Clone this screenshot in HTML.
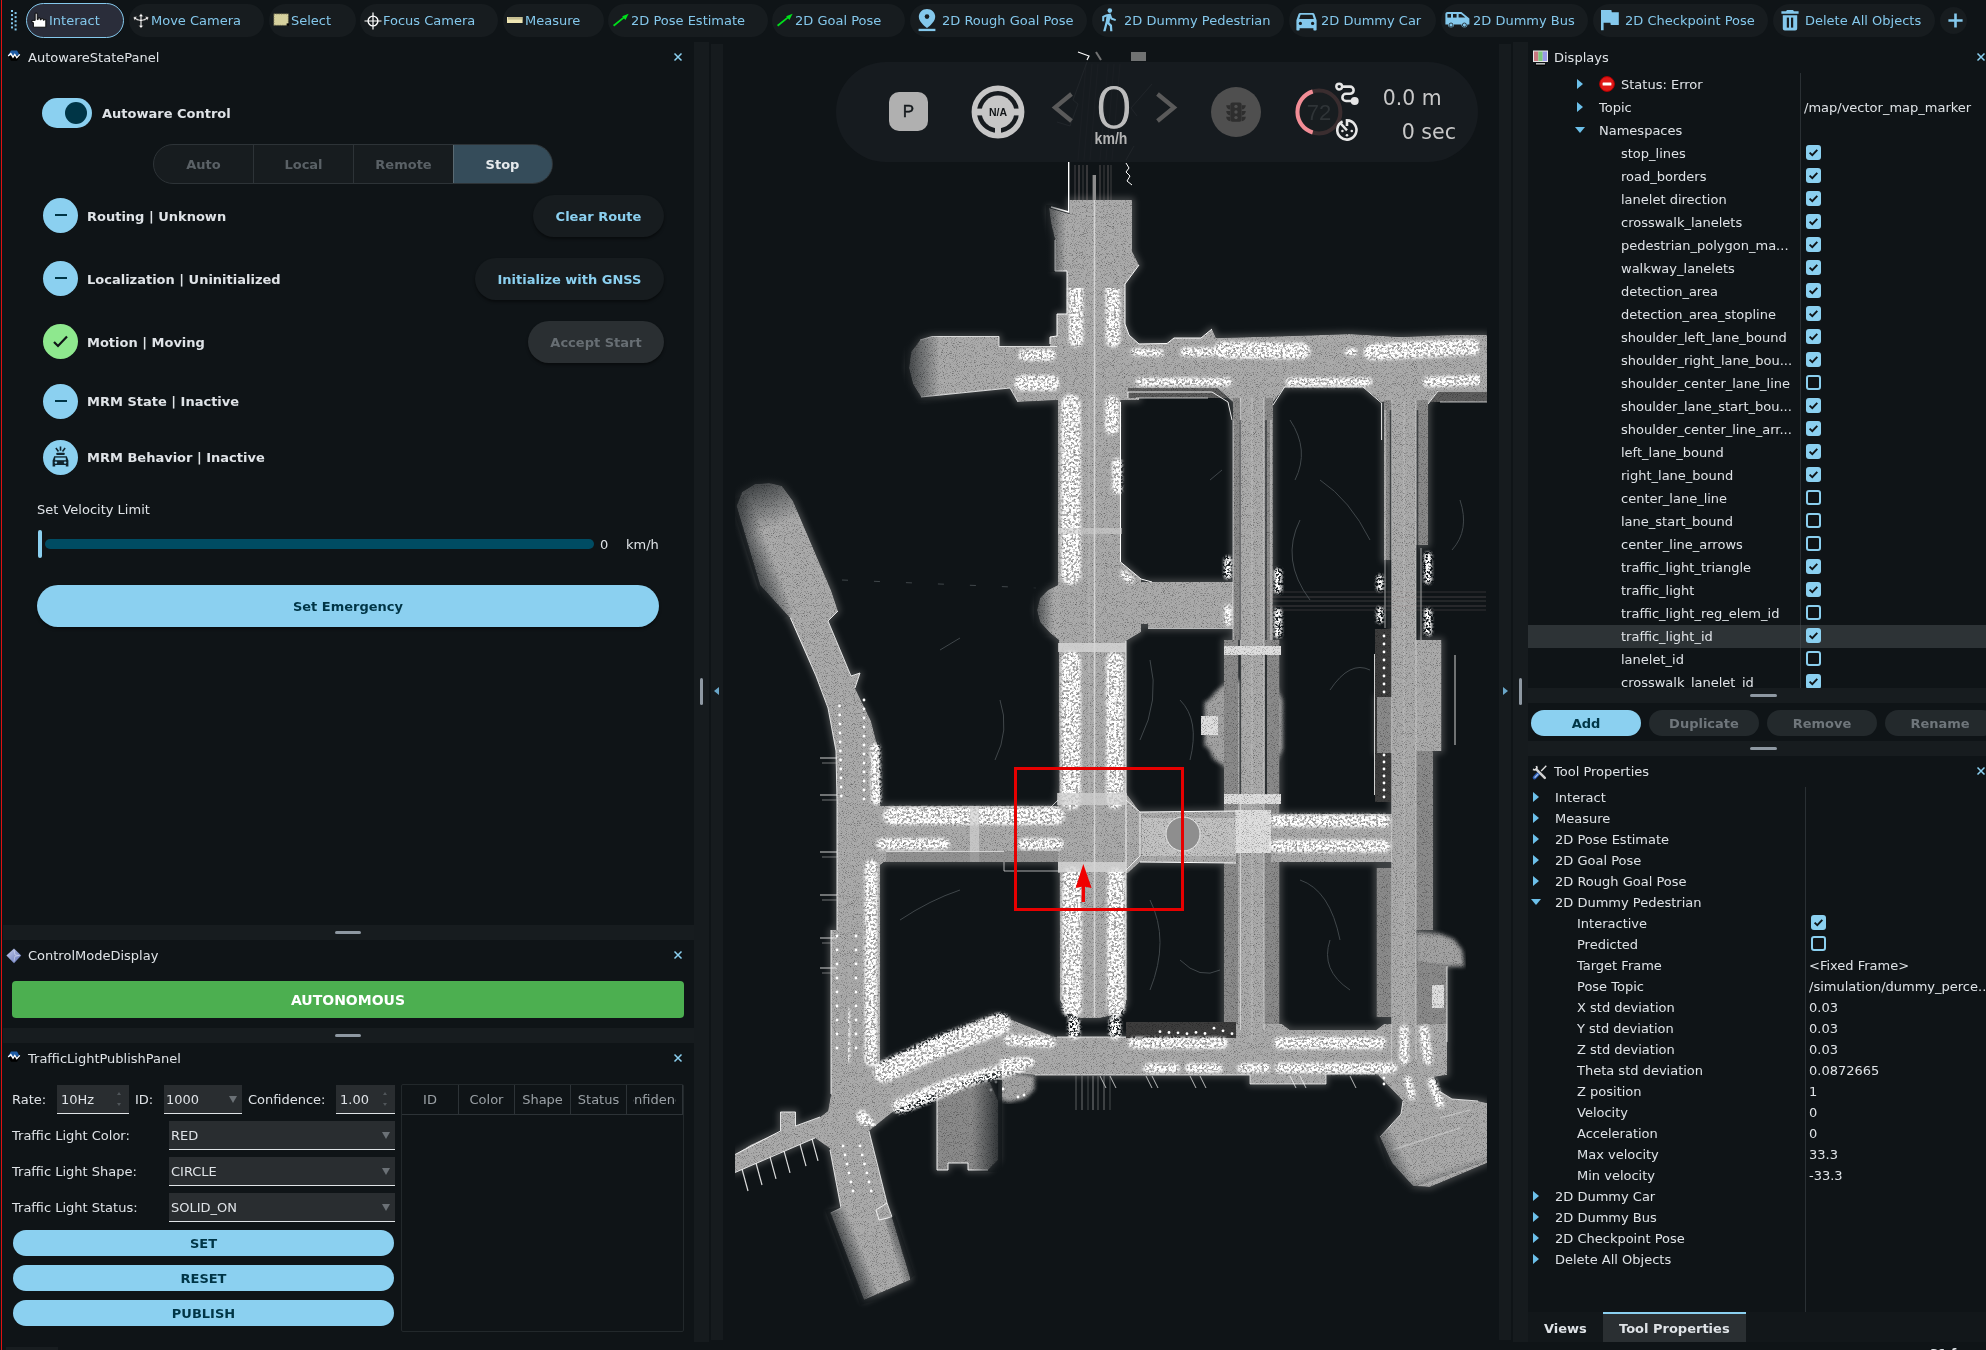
<!DOCTYPE html>
<html lang="en">
<head>
<meta charset="utf-8">
<title>RViz - Autoware</title>
<style>
*{box-sizing:border-box;margin:0;padding:0}
html,body{width:1986px;height:1350px;overflow:hidden;background:#0f1417}
body{position:relative;filter:contrast(1);font-family:"DejaVu Sans","Liberation Sans",sans-serif;font-size:13px;color:#dfe3e7;line-height:20px}
.a{position:absolute;white-space:nowrap}
.t{position:absolute;white-space:nowrap;height:20px;line-height:22px}
.b{font-weight:bold}
.blue{color:#8bd0f0}
.tb{position:absolute;top:4px;height:33px;border-radius:17px;background:#171c1f;color:#84c8ec;font-size:13px;line-height:34px;white-space:nowrap}
.tb span{position:absolute;top:0}
.tb svg{position:absolute}
.pill{position:absolute;border-radius:21px;background:#171c1f;box-shadow:0 2px 3px rgba(0,0,0,.45);font-weight:bold;color:#8bd0f0;text-align:center;height:42px;line-height:44px}
.circ{position:absolute;margin-left:.5px;width:35px;height:35px;border-radius:50%;background:#8bd0f0}
.bbtn{position:absolute;border-radius:13px;background:#8bd0f0;color:#003546;font-weight:bold;text-align:center;height:26px;line-height:28px}
.gbtn{position:absolute;border-radius:13px;background:#23292c;color:#6f767b;font-weight:bold;text-align:center;height:26px;line-height:28px}
.inp{position:absolute;background:#292d30;border-bottom:1px solid #e0e4e7;height:29px;line-height:30px;padding-left:4px;color:#dfe3e7;font-size:13px}
.hb{position:absolute;background:#8e98a2;border-radius:2px}
.strip{position:absolute;background:#171c1f}
.cb{position:absolute;width:15px;height:15px;border-radius:3px;background:#8bd0f0}
.cb.off{background:transparent;border:2px solid #8bd0f0}
.cb svg{position:absolute;left:0;top:0}
.ar{position:absolute;width:0;height:0;border-left:6px solid #6cc0ea;border-top:5px solid transparent;border-bottom:5px solid transparent}
.ad{position:absolute;width:0;height:0;border-top:6px solid #6cc0ea;border-left:5px solid transparent;border-right:5px solid transparent}
.x{position:absolute;width:10px;height:10px}
</style>
</head>
<body>
<!-- left red edge -->
<div class="a" style="left:1px;top:0;width:1px;height:1350px;background:#e01010"></div>
<!-- toolbar -->
<div id="toolbar">
<svg class="a" style="left:10px;top:9px" width="8" height="22" viewBox="0 0 8 22"><g fill="#84c8ec"><rect x="1" y="1.00" width="2" height="2"/><rect x="4.6" y="3.05" width="2" height="2"/><rect x="1" y="5.10" width="2" height="2"/><rect x="4.6" y="7.15" width="2" height="2"/><rect x="1" y="9.20" width="2" height="2"/><rect x="4.6" y="11.25" width="2" height="2"/><rect x="1" y="13.30" width="2" height="2"/><rect x="4.6" y="15.35" width="2" height="2"/><rect x="1" y="17.40" width="2" height="2"/><rect x="4.6" y="19.45" width="2" height="2"/></g></svg>
<div class="tb" style="left:26px;width:98px;background:#2a2d3a;border:1px solid #84c8ec;top:3px;height:35px;border-radius:18px"><span style="left:22px">Interact</span>
 <svg style="left:3px;top:8px" width="17" height="17" viewBox="0 0 17 17"><path d="M5.2 1.2h2v6.4h1V6h2v1.8h1V6.6h2v1.6h1V7.6h1.6v7.6H3.4v-4.6H2V8.4h3.2z" fill="#fff" stroke="#000" stroke-width=".9"/></svg></div>
<div class="tb" style="left:129px;width:135px"><span style="left:22px">Move Camera</span>
 <svg style="left:4px;top:9px" width="16" height="16" viewBox="0 0 16 16"><path d="M8 .6L10.4 3.4H8.8V6.6Q11.4 6.4 13 5L12 3.6L15.6 4L14.6 7.6L13.8 6.2Q12 7.8 8.8 8V12.4H10.4L8 15.2L5.6 12.4H7.2V8Q4 7.8 2.2 6.2L1.4 7.6L.4 4L4 3.6L3 5Q4.600 6.400 7.2 6.600V3.4H5.6Z" fill="#fff" stroke="#222" stroke-width=".5"/></svg></div>
<div class="tb" style="left:269px;width:87px"><span style="left:22px">Select</span>
 <svg style="left:4px;top:9px" width="17" height="14" viewBox="0 0 17 14"><rect x=".8" y=".8" width="14.6" height="11.6" fill="#d6d19e" stroke="#5a5840" stroke-width="1" stroke-dasharray="1.2 1.2"/><rect x="13.6" y="10.4" width="2.4" height="2.4" fill="#000"/></svg></div>
<div class="tb" style="left:360px;width:138px"><span style="left:23px">Focus Camera</span>
 <svg style="left:4px;top:8px" width="18" height="18" viewBox="-9 -9 18 18"><circle r="4.9" fill="none" stroke="#fff" stroke-width="1.4"/><path d="M-8.5 0H8.500M0 -8.5V8.500" stroke="#fff" stroke-width="1.2"/></svg></div>
<div class="tb" style="left:503px;width:101px"><span style="left:22px">Measure</span>
 <svg style="left:4px;top:13px" width="16" height="7" viewBox="0 0 16 7"><rect x="0" y="0" width="15.6" height="6" fill="#efe6b4"/><path d="M2 0v2.600M4 0v2.600M6 0v2.600M8 0v2.600M10 0v2.600M12 0v2.600M14 0v2.600" stroke="#8a8460" stroke-width=".8"/></svg></div>
<div class="tb" style="left:608px;width:160px"><span style="left:23px">2D Pose Estimate</span>
 <svg style="left:4px;top:8px" width="18" height="16" viewBox="0 0 18 16"><path d="M1.600 13.800L12 5.400" stroke="#00e01c" stroke-width="1.800"/><path d="M16.600 1.800L10.200 4.200L13.400 8Z" fill="#00e01c"/></svg></div>
<div class="tb" style="left:772px;width:133px"><span style="left:23px">2D Goal Pose</span>
 <svg style="left:4px;top:8px" width="18" height="16" viewBox="0 0 18 16"><path d="M1.600 13.800L12 5.400" stroke="#00e01c" stroke-width="1.800"/><path d="M16.600 1.800L10.200 4.200L13.400 8Z" fill="#00e01c"/></svg></div>
<div class="tb" style="left:910px;width:177px"><span style="left:32px">2D Rough Goal Pose</span>
 <svg style="left:8px;top:5px" width="18" height="23" viewBox="0 0 18 23"><path d="M9 0C4.400 0 .8 3.500 .8 7.900C.8 13 9 19 9 19S17.200 13 17.200 7.900C17.200 3.500 13.600 0 9 0Z" fill="#84c8ec"/><circle cx="9" cy="7.600" r="2.300" fill="#171c1f"/><rect x=".6" y="19.800" width="16.800" height="2.300" fill="#84c8ec"/></svg></div>
<div class="tb" style="left:1092px;width:192px"><span style="left:32px">2D Dummy Pedestrian</span>
 <svg style="left:9px;top:4px" width="16" height="24" viewBox="0 0 16 24"><g fill="#84c8ec"><circle cx="8.800" cy="2.600" r="2.300"/><path d="M4.800 6.400L9.600 5.600L11.200 9.800L15 11.200L14.400 13L9.800 11.600L9.200 10.200L8.400 14.400L11 17L11.400 23.200H9.200L8.800 18.200L6.400 16L4.600 23.200H2.200L4.800 13.200L5.400 8.400L3.200 9.400V13.200H1.200V8.200Z"/></g></svg></div>
<div class="tb" style="left:1289px;width:147px"><span style="left:32px">2D Dummy Car</span>
 <svg style="left:7px;top:9px" width="21" height="18" viewBox="0 0 21 18"><path d="M4.400 0H16.600C17.600 0 18.300 .6 18.600 1.400L20.600 7.200V16.600C20.600 17.200 20.200 17.600 19.600 17.600H18.400C17.800 17.600 17.400 17.200 17.400 16.600V15.200H3.600V16.600C3.600 17.200 3.200 17.600 2.600 17.600H1.400C.8 17.600 .4 17.200 .4 16.600V7.200L2.400 1.400C2.700 .6 3.400 0 4.400 0Z" fill="#84c8ec"/><path d="M4.600 1.800H16.400L17.800 6H3.200Z" fill="#171c1f"/><circle cx="4.400" cy="10.400" r="1.600" fill="#171c1f"/><circle cx="16.600" cy="10.400" r="1.600" fill="#171c1f"/></svg></div>
<div class="tb" style="left:1441px;width:147px"><span style="left:32px">2D Dummy Bus</span>
 <svg style="left:4px;top:8px" width="25" height="17" viewBox="0 0 25 17"><path d="M2.400 0H16.400L24.400 6.600V12.400H22.400A3 3 0 0 1 16.400 12.400H9A3 3 0 0 1 3 12.400H.4V2C.4 .9 1.300 0 2.400 0Z" fill="#84c8ec"/><g fill="#171c1f"><rect x="2.400" y="2" width="3.600" height="3.600"/><rect x="8" y="2" width="3.600" height="3.600"/><path d="M13.600 2H16L20.400 5.600H13.600Z"/></g><circle cx="6" cy="13" r="2" fill="#84c8ec" stroke="#171c1f" stroke-width=".8"/><circle cx="19.400" cy="13" r="2" fill="#84c8ec" stroke="#171c1f" stroke-width=".8"/></svg></div>
<div class="tb" style="left:1593px;width:175px"><span style="left:32px">2D Checkpoint Pose</span>
 <svg style="left:8px;top:6px" width="18" height="21" viewBox="0 0 18 21"><path d="M0 0H10.400L10.800 2.200H17.800V15H9.800L9.400 12.800H2.600V20.200H0Z" fill="#84c8ec"/></svg></div>
<div class="tb" style="left:1773px;width:162px"><span style="left:32px">Delete All Objects</span>
 <svg style="left:8px;top:6px" width="18" height="21" viewBox="0 0 18 21"><path d="M6 0H12L13 1.200H17.600V3.800H.4V1.200H5Z" fill="#84c8ec"/><path d="M1.800 5.200H16.200V18.400C16.200 19.600 15.300 20.400 14.200 20.400H3.800C2.700 20.400 1.800 19.600 1.800 18.400Z" fill="#84c8ec"/><rect x="5.800" y="7.600" width="2.200" height="10" fill="#171c1f"/><rect x="10" y="7.600" width="2.200" height="10" fill="#171c1f"/></svg></div>
<div class="tb" style="left:1940px;width:27px;top:7px;height:27px;border-radius:14px"><svg style="left:7.500px;top:6px" width="15" height="15" viewBox="0 0 15 15"><path d="M7.500 .4V14.600M.4 7.500H14.600" stroke="#84c8ec" stroke-width="2.600"/></svg></div>
</div>
<!-- ===== AutowareStatePanel ===== -->
<div id="left">
<svg class="a" style="left:7px;top:50px" width="14" height="12" viewBox="0 0 14 12"><path d="M4 .6H10L13 5.800H1Z" fill="#1f5ca4"/><path d="M1 5.800H13L10 10.800H4Z" fill="#000"/><path d="M1.200 6L3.800 3.600L6 7.200L7.800 4.400L9.800 7.600L12.800 4.400" fill="none" stroke="#fff" stroke-width="1.300"/></svg>
<div class="t" style="left:28px;top:47px">AutowareStatePanel</div>
<svg class="x" style="left:673px;top:52px" viewBox="0 0 10 10"><path d="M1.500 1.500L8.500 8.500M8.500 1.500L1.500 8.500" stroke="#8bd0f0" stroke-width="1.500" fill="none"/></svg>
<!-- toggle -->
<div class="a" style="left:42px;top:98px;width:50px;height:30px;border-radius:15px;background:#8bd0f0"></div>
<div class="a" style="left:65px;top:102px;width:22px;height:22px;border-radius:11px;background:#003546"></div>
<div class="t b" style="left:102px;top:103px">Autoware Control</div>
<!-- segmented -->
<div class="a" style="left:153px;top:144px;width:400px;height:40px;border-radius:20px;background:#171c1f;border:1px solid #2d3337;overflow:hidden">
 <div class="a" style="left:99px;top:0;width:1px;height:40px;background:#2d3337"></div>
 <div class="a" style="left:199px;top:0;width:1px;height:40px;background:#2d3337"></div>
 <div class="a" style="left:299px;top:-1px;width:100px;height:40px;background:#354c5a;border:1px solid #5a6a72;border-radius:0 20px 20px 0"></div>
 <div class="t b" style="left:0;width:99px;top:9px;text-align:center;color:#5a6166">Auto</div>
 <div class="t b" style="left:100px;width:99px;top:9px;text-align:center;color:#5a6166">Local</div>
 <div class="t b" style="left:200px;width:99px;top:9px;text-align:center;color:#5a6166">Remote</div>
 <div class="t b" style="left:299px;width:99px;top:9px;text-align:center;color:#e6eaed">Stop</div>
</div>
<!-- status rows -->
<div class="circ" style="left:42px;top:198px"><div class="a" style="left:12px;top:16px;width:12px;height:2px;background:#003546"></div></div>
<div class="t b" style="left:87px;top:206px">Routing | Unknown</div>
<div class="pill" style="left:533px;top:195px;width:131px">Clear Route</div>

<div class="circ" style="left:42px;top:261px"><div class="a" style="left:12px;top:16px;width:12px;height:2px;background:#003546"></div></div>
<div class="t b" style="left:87px;top:269px">Localization | Uninitialized</div>
<div class="pill" style="left:475px;top:258px;width:189px">Initialize with GNSS</div>

<div class="circ" style="left:42px;top:324px;background:#8ee88e"><svg class="a" style="left:9px;top:10px" width="17" height="15" viewBox="0 0 17 15"><path d="M2 8L6 12L15 2.5" stroke="#0f1417" stroke-width="2.2" fill="none"/></svg></div>
<div class="t b" style="left:87px;top:332px">Motion | Moving</div>
<div class="pill" style="left:528px;top:321px;width:136px;background:#2a2f32;color:#676e73">Accept Start</div>

<div class="circ" style="left:42px;top:384px"><div class="a" style="left:12px;top:16px;width:12px;height:2px;background:#003546"></div></div>
<div class="t b" style="left:87px;top:391px">MRM State | Inactive</div>

<div class="circ" style="left:42px;top:440px"><svg class="a" style="left:8px;top:6px" width="19" height="22" viewBox="0 0 19 22"><g fill="#10242e"><path d="M3.2 10.2h12.6l1.6 4.2v6.2h-2.6v-1.6H4.2v1.6H1.6v-6.2z"/><rect x="8.7" y="0.5" width="1.6" height="4.2"/><rect x="8.7" y="0.5" width="1.6" height="4.2" transform="rotate(-38 9.5 8)"/><rect x="8.7" y="0.5" width="1.6" height="4.2" transform="rotate(38 9.5 8)"/><rect x="5.2" y="6.8" width="8.6" height="2.2" rx="1"/></g><g fill="#8bd0f0"><rect x="4.2" y="11.6" width="10.6" height="2.6"/><circle cx="4.9" cy="16.6" r="1.2"/><circle cx="14.1" cy="16.6" r="1.2"/></g></svg></div>
<div class="t b" style="left:87px;top:447px">MRM Behavior | Inactive</div>

<div class="t" style="left:37px;top:499px">Set Velocity Limit</div>
<div class="a" style="left:45px;top:539px;width:549px;height:10px;border-radius:5px;background:#004c63"></div>
<div class="a" style="left:38px;top:530px;width:4px;height:28px;border-radius:2px;background:#8bd0f0"></div>
<div class="t" style="left:600px;top:534px">0</div>
<div class="t" style="left:626px;top:534px">km/h</div>
<div class="a b" style="left:37px;top:585px;width:622px;height:42px;border-radius:21px;background:#8bd0f0;color:#003546;text-align:center;line-height:44px;box-shadow:0 2px 3px rgba(0,0,0,.4)">Set Emergency</div>

<!-- splitter 1 -->
<div class="strip" style="left:3px;top:925px;width:691px;height:15px"></div>
<div class="hb" style="left:335px;top:931px;width:26px;height:3px"></div>
<!-- ControlModeDisplay -->
<svg class="a" style="left:6px;top:948px" width="16" height="16" viewBox="0 0 16 16"><defs><linearGradient id="dg" x1="0" y1="0" x2="1" y2="1"><stop offset="0" stop-color="#c8d0ee"/><stop offset="1" stop-color="#5c6eb4"/></linearGradient></defs><path d="M8 .4L15.200 7.400L8 15.200L.4 7.400Z" fill="url(#dg)"/><path d="M8 2L9 7L13.600 7.400L8.800 8.400L8 13.600" fill="none" stroke="#e6eaf8" stroke-width=".7" opacity=".7"/></svg>
<div class="t" style="left:28px;top:945px">ControlModeDisplay</div>
<svg class="x" style="left:673px;top:950px" viewBox="0 0 10 10"><path d="M1.500 1.500L8.500 8.500M8.500 1.500L1.500 8.500" stroke="#8bd0f0" stroke-width="1.500" fill="none"/></svg>
<div class="a b" style="left:12px;top:981px;width:672px;height:37px;border-radius:4px;background:#4caf50;color:#fff;text-align:center;line-height:38px;font-size:14px">AUTONOMOUS</div>
<!-- splitter 2 -->
<div class="strip" style="left:3px;top:1028px;width:691px;height:15px"></div>
<div class="hb" style="left:335px;top:1034px;width:26px;height:3px"></div>
<!-- TrafficLightPublishPanel -->
<svg class="a" style="left:7px;top:1051px" width="14" height="12" viewBox="0 0 14 12"><path d="M4 .6H10L13 5.800H1Z" fill="#1f5ca4"/><path d="M1 5.800H13L10 10.800H4Z" fill="#000"/><path d="M1.200 6L3.800 3.600L6 7.200L7.800 4.400L9.800 7.600L12.800 4.400" fill="none" stroke="#fff" stroke-width="1.300"/></svg>
<div class="t" style="left:28px;top:1048px">TrafficLightPublishPanel</div>
<svg class="x" style="left:673px;top:1053px" viewBox="0 0 10 10"><path d="M1.500 1.500L8.500 8.500M8.500 1.500L1.500 8.500" stroke="#8bd0f0" stroke-width="1.500" fill="none"/></svg>
<div class="t" style="left:12px;top:1089px">Rate:</div>
<div class="inp" style="left:57px;top:1085px;width:72px">10Hz</div>
<div class="t" style="left:135px;top:1089px">ID:</div>
<div class="inp" style="left:164px;top:1085px;width:78px;padding-left:2px">1000</div>
<div class="t" style="left:248px;top:1089px">Confidence:</div>
<div class="inp" style="left:336px;top:1085px;width:59px">1.00</div>
<div class="t" style="left:12px;top:1125px">Traffic Light Color:</div>
<div class="inp" style="left:169px;top:1121px;width:226px;padding-left:2px">RED</div>
<div class="t" style="left:12px;top:1161px">Traffic Light Shape:</div>
<div class="inp" style="left:169px;top:1157px;width:226px;padding-left:2px">CIRCLE</div>
<div class="t" style="left:12px;top:1197px">Traffic Light Status:</div>
<div class="inp" style="left:169px;top:1193px;width:226px;padding-left:2px">SOLID_ON</div>
<div class="bbtn" style="left:13px;top:1230px;width:381px">SET</div>
<div class="bbtn" style="left:13px;top:1265px;width:381px">RESET</div>
<div class="bbtn" style="left:13px;top:1300px;width:381px">PUBLISH</div>
<div class="a" style="left:229px;top:1096px;width:0;height:0;border-top:7px solid #6b7176;border-left:4px solid transparent;border-right:4px solid transparent"></div><div class="a" style="left:382px;top:1132px;width:0;height:0;border-top:7px solid #6b7176;border-left:4px solid transparent;border-right:4px solid transparent"></div><div class="a" style="left:382px;top:1168px;width:0;height:0;border-top:7px solid #6b7176;border-left:4px solid transparent;border-right:4px solid transparent"></div><div class="a" style="left:382px;top:1204px;width:0;height:0;border-top:7px solid #6b7176;border-left:4px solid transparent;border-right:4px solid transparent"></div><div class="a" style="left:117px;top:1092px;width:0;height:0;border-bottom:3px solid #50565a;border-left:2px solid transparent;border-right:2px solid transparent"></div><div class="a" style="left:117px;top:1103px;width:0;height:0;border-top:3px solid #50565a;border-left:2px solid transparent;border-right:2px solid transparent"></div><div class="a" style="left:383px;top:1092px;width:0;height:0;border-bottom:3px solid #50565a;border-left:2px solid transparent;border-right:2px solid transparent"></div><div class="a" style="left:383px;top:1103px;width:0;height:0;border-top:3px solid #50565a;border-left:2px solid transparent;border-right:2px solid transparent"></div>
<div id="bl-strip" class="a" style="left:6px;top:1347px;width:52px;height:3px;background:#181d20"></div>
<!-- table -->
<div class="a" style="left:401px;top:1084px;width:283px;height:248px;border:1px solid #22282b;border-radius:2px"></div>
<div class="a" style="left:402px;top:1114px;width:281px;height:1px;background:#2d3337"></div>
<div class="a" style="left:458px;top:1085px;width:1px;height:29px;background:#2d3337"></div>
<div class="a" style="left:514px;top:1085px;width:1px;height:29px;background:#2d3337"></div>
<div class="a" style="left:570px;top:1085px;width:1px;height:29px;background:#2d3337"></div>
<div class="a" style="left:626px;top:1085px;width:1px;height:29px;background:#2d3337"></div>
<div class="a" style="left:682px;top:1085px;width:1px;height:29px;background:#2d3337"></div>
<div class="t" style="left:402px;width:56px;top:1089px;text-align:center;color:#9aa0a5">ID</div>
<div class="t" style="left:459px;width:55px;top:1089px;text-align:center;color:#9aa0a5">Color</div>
<div class="t" style="left:515px;width:55px;top:1089px;text-align:center;color:#9aa0a5">Shape</div>
<div class="t" style="left:571px;width:55px;top:1089px;text-align:center;color:#9aa0a5">Status</div>
<div class="a" style="left:633px;width:43px;top:1089px;height:20px;overflow:hidden"><div class="t" style="left:-16px;top:0;color:#9aa0a5">Confidence</div></div>
</div>
<!-- ===== 3D view (point cloud map) ===== -->
<svg class="a" style="left:723px;top:42px" width="776" height="1300" viewBox="723 42 776 1300">
<defs>
<clipPath id="vc"><rect x="735" y="44" width="752" height="1296"/></clipPath>
<filter id="nz" x="0" y="0" width="100%" height="100%" filterUnits="objectBoundingBox" color-interpolation-filters="sRGB">
 <feTurbulence type="fractalNoise" baseFrequency="1.1" numOctaves="2" seed="7" result="t"/>
 <feColorMatrix in="t" type="matrix" values="1.2 0 0 0 0.42  1.2 0 0 0 0.42  1.2 0 0 0 0.42  0 0 0 0 1" result="g"/>
 <feComposite in="SourceGraphic" in2="g" operator="arithmetic" k1="1" k2="0" k3="0" k4="0" result="m"/>
 <feComposite in="m" in2="SourceAlpha" operator="in"/>
</filter>
<filter id="sp" x="0" y="0" width="100%" height="100%" color-interpolation-filters="sRGB">
 <feTurbulence type="fractalNoise" baseFrequency="0.42" numOctaves="3" seed="11" result="t"/>
 <feColorMatrix in="t" type="matrix" values="0 0 0 0 1  0 0 0 0 1  0 0 0 0 1  6 0 0 0 -2.25" result="a"/>
 <feGaussianBlur in="SourceAlpha" stdDeviation="1.6" result="sb"/>
 <feComposite in="a" in2="sb" operator="in"/>
</filter>
<filter id="bl" x="-5%" y="-5%" width="110%" height="110%"><feGaussianBlur stdDeviation="3.2"/></filter>
<filter id="bl2" x="0" y="0" width="100%" height="100%" color-interpolation-filters="sRGB"><feGaussianBlur in="SourceGraphic" stdDeviation="2.4" result="b"/><feTurbulence type="fractalNoise" baseFrequency="1.1" numOctaves="2" seed="3" result="t"/><feColorMatrix in="t" type="matrix" values="1.2 0 0 0 0.42  1.2 0 0 0 0.42  1.2 0 0 0 0.42  0 0 0 0 1" result="g"/><feComposite in="b" in2="g" operator="arithmetic" k1="1" k2="0" k3="0" k4="0" result="m"/><feComposite in="m" in2="b" operator="in"/></filter>
</defs>
<g clip-path="url(#vc)">
<g filter="url(#bl)" opacity=".4">
<polygon points="1069.5,200 1132,200 1132,251 1139,265 1125,284 1125,324 1129,335 1139,344 1139,400 1050,400 1050,344 1050,337 1057,336 1057,314 1067,314 1067,271 1055,271 1055,240 1051,223 1049,208 1069.5,214" fill="#8c8c8c" stroke="#8c8c8c" stroke-width="5" stroke-linejoin="round"/>
<polygon points="1120,343.5 1167,343.5 1174,338 1201,338 1212,329 1216,338 1290,336 1350,334 1400,337 1450,335 1487,335 1487,390 1438,390.5 1428,404 1381.6,402 1363,387 1285,387 1273,402 1233,402 1217,388 1120,388" fill="#8c8c8c" stroke="#8c8c8c" stroke-width="5" stroke-linejoin="round"/>
<polygon points="1060,346.5 999,346.5 999,336.5 932,336.5 920,340 911,352 909,368 913,384 921,397 1010,388 1018,402 1060,400" fill="#8c8c8c" stroke="#8c8c8c" stroke-width="5" stroke-linejoin="round"/>
<polygon points="1058,398 1120.5,398 1120.5,562 1141,579 1141,632 1126,641 1126,1004 1118,1014 1100,1018 1080,1018 1066,1012 1060,1000 1058.8,640 1050,633 1040,622 1037,610 1040,598 1048,590 1058,585" fill="#8c8c8c" stroke="#8c8c8c" stroke-width="5" stroke-linejoin="round"/>
<polygon points="1120,582 1233,582 1233,628.5 1148,628.5 1148,624 1138,624 1138,634 1120,634" fill="#8c8c8c" stroke="#8c8c8c" stroke-width="5" stroke-linejoin="round"/>
<polygon points="1240.5,398 1264,398 1264,1040 1238,1040 1238,700 1240.5,700" fill="#8c8c8c" stroke="#8c8c8c" stroke-width="5" stroke-linejoin="round"/>
<polygon points="1233,398 1240.5,398 1240.5,640 1233,640" fill="#8c8c8c" stroke="#8c8c8c" stroke-width="5" stroke-linejoin="round"/>
<polygon points="1264,398 1273,398 1273,640 1264,640" fill="#8c8c8c" stroke="#8c8c8c" stroke-width="5" stroke-linejoin="round"/>
<polygon points="1224,640 1238,640 1238,1030 1224,1030" fill="#8c8c8c" stroke="#8c8c8c" stroke-width="5" stroke-linejoin="round"/>
<polygon points="1264,640 1279.5,640 1279.5,1030 1264,1030" fill="#8c8c8c" stroke="#8c8c8c" stroke-width="5" stroke-linejoin="round"/>
<polygon points="1391.7,400 1416,400 1416,1076 1391.7,1076" fill="#8c8c8c" stroke="#8c8c8c" stroke-width="5" stroke-linejoin="round"/>
<polygon points="1384,400 1391.7,400 1391.7,560 1384,560" fill="#8c8c8c" stroke="#8c8c8c" stroke-width="5" stroke-linejoin="round"/>
<polygon points="1416,400 1428,400 1428,545 1416,545" fill="#8c8c8c" stroke="#8c8c8c" stroke-width="5" stroke-linejoin="round"/>
<polygon points="1416,640 1441.5,640 1441.5,751 1416,751" fill="#8c8c8c" stroke="#8c8c8c" stroke-width="5" stroke-linejoin="round"/>
<polygon points="1416,751 1433,751 1433,930 1416,930" fill="#8c8c8c" stroke="#8c8c8c" stroke-width="5" stroke-linejoin="round"/>
<polygon points="1377,697 1392,697 1392,753 1377,753" fill="#8c8c8c" stroke="#8c8c8c" stroke-width="5" stroke-linejoin="round"/>
<polygon points="1376.5,868 1391.7,868 1391.7,1017 1376.5,1017" fill="#8c8c8c" stroke="#8c8c8c" stroke-width="5" stroke-linejoin="round"/>
<polygon points="1416,960 1447,966 1447,1042 1416,1042" fill="#8c8c8c" stroke="#8c8c8c" stroke-width="5" stroke-linejoin="round"/>
<polygon points="880,806 1060,806 1060,862 884,862 872,872 872,800" fill="#8c8c8c" stroke="#8c8c8c" stroke-width="5" stroke-linejoin="round"/>
<polygon points="1058,793 1126,793 1140,812 1236,811 1236,863 1140,862 1128,873 1058,873" fill="#8c8c8c" stroke="#8c8c8c" stroke-width="5" stroke-linejoin="round"/>
<polygon points="1271,814 1393,814 1393,862 1271,862" fill="#8c8c8c" stroke="#8c8c8c" stroke-width="5" stroke-linejoin="round"/>
<polygon points="770,483 782,486 793,501 831,590 838,611 828,621 851,676 860,673 855,688 871,721 878.7,751 880,800 880,1062 869,1131 887,1203 892,1217 910,1277 910,1280 864,1300 830.5,1213 841,1208 830,1150 831,1094 831,930 837,930 837,801 836,751 828,708 816,676 790,618 760,585 736.5,506 742,492 755,484" fill="#8c8c8c" stroke="#8c8c8c" stroke-width="5" stroke-linejoin="round"/>
<polygon points="831,1094 828,1111 820,1117 795.5,1126 795.5,1112 780.5,1112 780.5,1131 750,1145 735,1154.5 735,1172.5 815,1138 832,1150" fill="#8c8c8c" stroke="#8c8c8c" stroke-width="5" stroke-linejoin="round"/>
<polygon points="1055,1037 1236,1037 1236,1024 1282,1024 1290,1030 1376,1030 1384,1024 1447,1024 1447,1075 1375,1074 1326,1074 1326,1084 1250,1084 1250,1075 1035,1075 997,1071 937,1091 894,1111 869,1131 876,1066 935,1040 992,1016 1005,1017" fill="#8c8c8c" stroke="#8c8c8c" stroke-width="5" stroke-linejoin="round"/>
<polygon points="937,1086 990,1082 998,1100 998,1160 988,1170 968,1170 968,1163 948,1163 948,1170 937,1170" fill="#8c8c8c" stroke="#8c8c8c" stroke-width="5" stroke-linejoin="round"/>
<polygon points="1377,1074 1403,1101 1401,1114 1380,1137 1392,1163 1413,1186 1430,1187 1487,1163 1487,1103 1478,1101 1452,1099 1439,1091 1434,1077 1447,1075 1447,1055 1416,1055 1416,1074" fill="#8c8c8c" stroke="#8c8c8c" stroke-width="5" stroke-linejoin="round"/>
</g>
<g filter="url(#bl2)">
<polygon points="1215,690 1228,680 1260,677 1276,684 1284,700 1284,750 1276,765 1255,772 1228,770 1212,760 1207,748 1203,748 1203,700 1207,700" fill="#a2a2a2"/>
<polygon points="1414,930 1440,932 1455,938 1464,950 1466,968 1447,968 1414,968" fill="#a2a2a2"/>
<polygon points="998,1070 1036,1074 1036,1090 1026,1100 1008,1104 998,1100" fill="#a2a2a2"/>
</g>
<g filter="url(#nz)">
<polygon points="1069.5,200 1132,200 1132,251 1139,265 1125,284 1125,324 1129,335 1139,344 1139,400 1050,400 1050,344 1050,337 1057,336 1057,314 1067,314 1067,271 1055,271 1055,240 1051,223 1049,208 1069.5,214" fill="#aaaaaa"/>
<polygon points="1120,343.5 1167,343.5 1174,338 1201,338 1212,329 1216,338 1290,336 1350,334 1400,337 1450,335 1487,335 1487,390 1438,390.5 1428,404 1381.6,402 1363,387 1285,387 1273,402 1233,402 1217,388 1120,388" fill="#aaaaaa"/>
<polygon points="1060,346.5 999,346.5 999,336.5 932,336.5 920,340 911,352 909,368 913,384 921,397 1010,388 1018,402 1060,400" fill="#aaaaaa"/>
<polygon points="1128,388 1217,388 1228,398 1128,398" fill="#5c5c5c"/>
<polygon points="1438,390 1487,390 1487,402 1430,402" fill="#5c5c5c"/>
<polygon points="1058,398 1120.5,398 1120.5,562 1141,579 1141,632 1126,641 1126,1004 1118,1014 1100,1018 1080,1018 1066,1012 1060,1000 1058.8,640 1050,633 1040,622 1037,610 1040,598 1048,590 1058,585" fill="#aaaaaa"/>
<polygon points="1120,582 1233,582 1233,628.5 1148,628.5 1148,624 1138,624 1138,634 1120,634" fill="#aaaaaa"/>
<polygon points="1240.5,398 1264,398 1264,1040 1238,1040 1238,700 1240.5,700" fill="#aaaaaa"/>
<polygon points="1233,398 1240.5,398 1240.5,640 1233,640" fill="#8a8a8a"/>
<polygon points="1264,398 1273,398 1273,640 1264,640" fill="#8a8a8a"/>
<polygon points="1224,640 1238,640 1238,1030 1224,1030" fill="#8a8a8a"/>
<polygon points="1264,640 1279.5,640 1279.5,1030 1264,1030" fill="#8a8a8a"/>
<polygon points="1201,716 1218,716 1218,735 1201,735" fill="#dedede"/>
<polygon points="1224,646 1281,646 1281,655 1224,655" fill="#dedede"/>
<polygon points="1224,794 1281,794 1281,804 1224,804" fill="#dedede"/>
<polygon points="1391.7,400 1416,400 1416,1076 1391.7,1076" fill="#aaaaaa"/>
<polygon points="1384,400 1391.7,400 1391.7,560 1384,560" fill="#8a8a8a"/>
<polygon points="1416,400 1428,400 1428,545 1416,545" fill="#8a8a8a"/>
<polygon points="1375,629 1391.7,629 1391.7,802 1375,802" fill="#3c3c3c"/>
<polygon points="1416,640 1441.5,640 1441.5,751 1416,751" fill="#aaaaaa"/>
<polygon points="1416,751 1433,751 1433,930 1416,930" fill="#8a8a8a"/>
<polygon points="1377,697 1392,697 1392,753 1377,753" fill="#8a8a8a"/>
<polygon points="1376.5,868 1391.7,868 1391.7,1017 1376.5,1017" fill="#8a8a8a"/>
<polygon points="1416,960 1447,966 1447,1042 1416,1042" fill="#8a8a8a"/>
<polygon points="1432,985 1444,985 1444,1008 1432,1008" fill="#dedede"/>
<polygon points="880,806 1060,806 1060,862 884,862 872,872 872,800" fill="#aaaaaa"/>
<polygon points="1058,793 1126,793 1140,812 1236,811 1236,863 1140,862 1128,873 1058,873" fill="#aaaaaa"/>
<polygon points="1142,818 1236,818 1236,856 1142,856" fill="#c2c2c2"/>
<polygon points="1235.5,810 1271,810 1271,853 1235.5,853" fill="#dedede"/>
<polygon points="1271,814 1393,814 1393,862 1271,862" fill="#aaaaaa"/>
<polygon points="770,483 782,486 793,501 831,590 838,611 828,621 851,676 860,673 855,688 871,721 878.7,751 880,800 880,1062 869,1131 887,1203 892,1217 910,1277 910,1280 864,1300 830.5,1213 841,1208 830,1150 831,1094 831,930 837,930 837,801 836,751 828,708 816,676 790,618 760,585 736.5,506 742,492 755,484" fill="#aaaaaa"/>
<polygon points="831,1094 828,1111 820,1117 795.5,1126 795.5,1112 780.5,1112 780.5,1131 750,1145 735,1154.5 735,1172.5 815,1138 832,1150" fill="#aaaaaa"/>
<polygon points="1055,1037 1236,1037 1236,1024 1282,1024 1290,1030 1376,1030 1384,1024 1447,1024 1447,1075 1375,1074 1326,1074 1326,1084 1250,1084 1250,1075 1035,1075 997,1071 937,1091 894,1111 869,1131 876,1066 935,1040 992,1016 1005,1017" fill="#aaaaaa"/>
<polygon points="1126,1022 1236,1022 1236,1038 1126,1038" fill="#3c3c3c"/>
<polygon points="937,1086 990,1082 998,1100 998,1160 988,1170 968,1170 968,1163 948,1163 948,1170 937,1170" fill="#8a8a8a"/>
<polygon points="1377,1074 1403,1101 1401,1114 1380,1137 1392,1163 1413,1186 1430,1187 1487,1163 1487,1103 1478,1101 1452,1099 1439,1091 1434,1077 1447,1075 1447,1055 1416,1055 1416,1074" fill="#aaaaaa"/>
</g>
<g filter="url(#sp)" stroke="#fff" stroke-linecap="round" fill="none">
<path d="M1076 288L1076 340" stroke-width="15"/>
<path d="M1113 288L1113 340" stroke-width="15"/>
<path d="M1222 350L1302 351" stroke-width="17"/>
<path d="M1349 352L1353 352" stroke-width="9"/>
<path d="M1372 352L1472 347" stroke-width="17"/>
<path d="M1135 352L1160 353" stroke-width="8"/>
<path d="M1185 352L1210 352" stroke-width="10"/>
<path d="M1140 382L1228 382" stroke-width="9"/>
<path d="M1290 382L1368 382" stroke-width="9"/>
<path d="M1428 382L1480 380" stroke-width="11"/>
<path d="M1024 355L1050 355" stroke-width="12"/>
<path d="M1022 383L1052 383" stroke-width="16"/>
<path d="M1071 404L1071 575" stroke-width="20"/>
<path d="M1112 402L1112 428" stroke-width="14"/>
<path d="M1117 463L1117 490" stroke-width="10"/>
<path d="M1071 660L1071 800" stroke-width="20"/>
<path d="M1115 660L1115 800" stroke-width="18"/>
<path d="M1072 876L1072 1008" stroke-width="20"/>
<path d="M1116 876L1116 1008" stroke-width="18"/>
<path d="M892 816L1056 816" stroke-width="18"/>
<path d="M882 844L944 844" stroke-width="12"/>
<path d="M1024 844L1058 844" stroke-width="12"/>
<path d="M1276 821L1384 821" stroke-width="13"/>
<path d="M1276 846L1384 846" stroke-width="13"/>
<path d="M875 748L876 800" stroke-width="10"/>
<path d="M871 866L871 1060" stroke-width="13"/>
<path d="M848 1010L848 1060" stroke-width="4"/>
<path d="M884 1072L940 1046" stroke-width="22"/>
<path d="M940 1046L1000 1024" stroke-width="22"/>
<path d="M900 1106L960 1082" stroke-width="16"/>
<path d="M960 1082L1020 1066" stroke-width="14"/>
<path d="M1010 1040L1050 1042" stroke-width="12"/>
<path d="M1134 1043L1222 1043" stroke-width="12"/>
<path d="M1280 1043L1380 1043" stroke-width="13"/>
<path d="M1148 1068L1175 1068" stroke-width="10"/>
<path d="M1190 1068L1218 1068" stroke-width="10"/>
<path d="M1242 1068L1266 1068" stroke-width="10"/>
<path d="M1280 1068L1392 1068" stroke-width="11"/>
<path d="M1005 1062L1030 1062" stroke-width="10"/>
<path d="M1404 1030L1404 1060" stroke-width="10"/>
<path d="M1424 1030L1428 1060" stroke-width="10"/>
<path d="M1408 1080L1412 1096" stroke-width="8"/>
<path d="M1432 1082L1440 1104" stroke-width="9"/>
<path d="M1228 560L1228 575" stroke-width="8"/>
<path d="M1228 608L1228 622" stroke-width="8"/>
<path d="M1278 572L1278 590" stroke-width="8"/>
<path d="M1278 612L1278 634" stroke-width="8"/>
<path d="M1380 578L1380 588" stroke-width="7"/>
<path d="M1380 610L1380 620" stroke-width="7"/>
<path d="M1428 556L1428 580" stroke-width="8"/>
<path d="M1428 612L1428 632" stroke-width="8"/>
<path d="M1074 1022L1074 1034" stroke-width="12"/>
<path d="M1115 1022L1115 1034" stroke-width="12"/>
<path d="M862 1116L870 1126" stroke-width="12"/>
<path d="M1124 574L1130 580" stroke-width="8"/>
</g>
<g fill="#fff"><circle cx="839.5" cy="706.0" r="1.4"/><circle cx="839.7" cy="715.0" r="1.4"/><circle cx="839.9" cy="724.0" r="1.4"/><circle cx="840.0" cy="733.0" r="1.4"/><circle cx="840.2" cy="742.0" r="1.4"/><circle cx="840.4" cy="751.0" r="1.4"/><circle cx="840.6" cy="760.0" r="1.4"/><circle cx="840.8" cy="769.0" r="1.4"/><circle cx="840.9" cy="778.0" r="1.4"/><circle cx="841.1" cy="787.0" r="1.4"/><circle cx="841.3" cy="796.0" r="1.4"/><circle cx="864.0" cy="700.0" r="1.4"/><circle cx="864.0" cy="709.0" r="1.4"/><circle cx="864.0" cy="718.0" r="1.4"/><circle cx="864.0" cy="727.0" r="1.4"/><circle cx="864.0" cy="736.0" r="1.4"/><circle cx="864.0" cy="745.0" r="1.4"/><circle cx="864.0" cy="754.0" r="1.4"/><circle cx="864.0" cy="763.0" r="1.4"/><circle cx="864.0" cy="772.0" r="1.4"/><circle cx="864.0" cy="781.0" r="1.4"/><circle cx="864.0" cy="790.0" r="1.4"/><circle cx="864.0" cy="799.0" r="1.4"/><circle cx="837.0" cy="936.0" r="1.4"/><circle cx="856.0" cy="936.0" r="1.4"/><circle cx="837.0" cy="950.0" r="1.4"/><circle cx="856.0" cy="950.0" r="1.4"/><circle cx="837.0" cy="964.0" r="1.4"/><circle cx="856.0" cy="964.0" r="1.4"/><circle cx="837.0" cy="978.0" r="1.4"/><circle cx="856.0" cy="978.0" r="1.4"/><circle cx="837.0" cy="992.0" r="1.4"/><circle cx="856.0" cy="992.0" r="1.4"/><circle cx="837.0" cy="1006.0" r="1.4"/><circle cx="856.0" cy="1006.0" r="1.4"/><circle cx="837.0" cy="1020.0" r="1.4"/><circle cx="856.0" cy="1020.0" r="1.4"/><circle cx="837.0" cy="1034.0" r="1.4"/><circle cx="856.0" cy="1034.0" r="1.4"/><circle cx="837.0" cy="1048.0" r="1.4"/><circle cx="856.0" cy="1048.0" r="1.4"/><circle cx="843.0" cy="1146.0" r="1.4"/><circle cx="860.0" cy="1146.0" r="1.4"/><circle cx="845.0" cy="1155.0" r="1.4"/><circle cx="862.2" cy="1155.0" r="1.4"/><circle cx="847.0" cy="1164.0" r="1.4"/><circle cx="864.5" cy="1164.0" r="1.4"/><circle cx="848.9" cy="1173.0" r="1.4"/><circle cx="866.8" cy="1173.0" r="1.4"/><circle cx="850.9" cy="1182.0" r="1.4"/><circle cx="869.0" cy="1182.0" r="1.4"/><circle cx="852.9" cy="1191.0" r="1.4"/><circle cx="871.2" cy="1191.0" r="1.4"/><circle cx="1160.0" cy="1031.7" r="1.4"/><circle cx="1169.0" cy="1032.5" r="1.4"/><circle cx="1178.0" cy="1032.8" r="1.4"/><circle cx="1187.0" cy="1033.7" r="1.4"/><circle cx="1196.0" cy="1032.4" r="1.4"/><circle cx="1205.0" cy="1033.5" r="1.4"/><circle cx="1214.0" cy="1028.2" r="1.4"/><circle cx="1223.0" cy="1030.8" r="1.4"/><circle cx="1232.0" cy="1033.7" r="1.4"/><circle cx="1384.0" cy="636.0" r="1.4"/><circle cx="1384.0" cy="644.0" r="1.4"/><circle cx="1384.0" cy="652.0" r="1.4"/><circle cx="1384.0" cy="660.0" r="1.4"/><circle cx="1384.0" cy="668.0" r="1.4"/><circle cx="1384.0" cy="676.0" r="1.4"/><circle cx="1384.0" cy="684.0" r="1.4"/><circle cx="1384.0" cy="692.0" r="1.4"/><circle cx="1384.0" cy="755.0" r="1.4"/><circle cx="1384.0" cy="762.0" r="1.4"/><circle cx="1384.0" cy="769.0" r="1.4"/><circle cx="1384.0" cy="776.0" r="1.4"/><circle cx="1384.0" cy="783.0" r="1.4"/><circle cx="1384.0" cy="790.0" r="1.4"/><circle cx="1384.0" cy="797.0" r="1.4"/><circle cx="1384.0" cy="1072.0" r="1.4"/><circle cx="1384.0" cy="1078.0" r="1.4"/><circle cx="1384.0" cy="1084.0" r="1.4"/><circle cx="986.0" cy="1081.0" r="1.4"/><circle cx="991.0" cy="1090.0" r="1.4"/><circle cx="996.0" cy="1082.0" r="1.4"/><circle cx="1003.0" cy="1089.0" r="1.4"/><circle cx="1024.0" cy="1095.0" r="1.4"/><circle cx="1018.0" cy="1097.0" r="1.4"/></g>
<g fill="none"><polyline points="1068.7,162 1068.7,212 1051,207" stroke="#fff" stroke-width="1.4" opacity="1"/><polyline points="1075,165 1075,200" stroke="#b0a0a0" stroke-width="1" opacity="0.35"/><polyline points="1079,165 1079,200" stroke="#b0a0a0" stroke-width="1" opacity="0.5"/><polyline points="1083,165 1083,200" stroke="#b0a0a0" stroke-width="1" opacity="0.3"/><polyline points="1087,165 1087,200" stroke="#b0a0a0" stroke-width="1" opacity="0.5"/><polyline points="1100,165 1100,200" stroke="#b0a0a0" stroke-width="1" opacity="0.4"/><polyline points="1104,165 1104,200" stroke="#b0a0a0" stroke-width="1" opacity="0.3"/><polyline points="1108,165 1108,200" stroke="#b0a0a0" stroke-width="1" opacity="0.45"/><polyline points="1111,165 1111,200" stroke="#b0a0a0" stroke-width="1" opacity="0.3"/><rect x="1092.6" y="175" width="3.4" height="25" fill="#8c8c8c"/><polyline points="1126,163 1129,168 1126,172 1130,176 1127,181 1132,185" stroke="#fff" stroke-width="1" opacity="1"/><polyline points="1078,52 1089,56 1087,60" stroke="#fff" stroke-width="1.2" opacity="1"/><polyline points="1087,62 1073,100 1078,104 1070,126 1057,122" stroke="#8a9296" stroke-width="1" opacity="0.8"/><polyline points="1086,64 1078,160" stroke="#8a8088" stroke-width="1" opacity="0.35"/><polyline points="1092,64 1084,160" stroke="#8a8088" stroke-width="1" opacity="0.35"/><polyline points="1098,64 1090,160" stroke="#8a8088" stroke-width="1" opacity="0.35"/><polyline points="1108,64 1100,160" stroke="#8a8088" stroke-width="1" opacity="0.35"/><polyline points="1114,64 1106,160" stroke="#8a8088" stroke-width="1" opacity="0.35"/><polyline points="1120,64 1112,160" stroke="#8a8088" stroke-width="1" opacity="0.35"/><polyline points="1152,84 1131,108 1137,116" stroke="#8a9296" stroke-width="1" opacity="0.8"/><polyline points="1134,146 1126,160" stroke="#8a9296" stroke-width="1" opacity="0.8"/><rect x="1131" y="52" width="15" height="9" fill="#9a9a9a" opacity=".7"/><polyline points="1096,52 1101,60" stroke="#8a8a8a" stroke-width="2" opacity="0.8"/><polyline points="1055,240 1055,271 1067,271 1067,314 1057,314 1057,336 1050,337 1050,344" stroke="#fff" stroke-width="1" opacity="1"/><polyline points="1125,284 1125,324 1129,335 1139,344 1167,343.5 1174,338 1201,338 1212,329" stroke="#fff" stroke-width="1" opacity="1"/><polyline points="1139,265 1125,284" stroke="#fff" stroke-width="1" opacity="1"/><polyline points="1094.5,200 1094.5,1017" stroke="#e4e4e4" stroke-width="1.6" opacity="0.75"/><polyline points="1089,400 1089,800" stroke="#d0d0d0" stroke-width="1" opacity="0.4"/><polyline points="1120.5,402 1120.5,562 1141,579" stroke="#fff" stroke-width="1" opacity="1"/><polyline points="1126,641 1126,1000" stroke="#fff" stroke-width="1" opacity="0.9"/><polyline points="920,340 932,336.5 999,336.5 999,346.5 1057,346.5" stroke="#fff" stroke-width="1" opacity="0.8"/><polyline points="921,397 1010,388 1018,402" stroke="#fff" stroke-width="1" opacity="0.8"/><polyline points="1128,398 1128,392 1212,392 1228,402 1232,420" stroke="#fff" stroke-width="1" opacity="0.9"/><polyline points="1136,398 1208,398" stroke="#fff" stroke-width="1" opacity="0.7"/><polyline points="1273,405 1284.6,387 1363,387 1381.6,403 1381.6,440" stroke="#fff" stroke-width="1" opacity="0.9"/><polyline points="1428,404 1438,391 1487,391" stroke="#fff" stroke-width="1" opacity="0.9"/><polyline points="1440,402 1487,402" stroke="#fff" stroke-width="1" opacity="0.7"/><polyline points="1240.5,398 1240.5,1030" stroke="#e0e0e0" stroke-width="1" opacity="0.7"/><polyline points="1264,398 1264,1030" stroke="#e0e0e0" stroke-width="1" opacity="0.7"/><polyline points="1252,398 1252,1040" stroke="#d8d8d8" stroke-width="1" opacity="0.4"/><polyline points="1233,420 1233,640" stroke="#fff" stroke-width="1" opacity="0.6"/><polyline points="1271,420 1271,640" stroke="#fff" stroke-width="1" opacity="0.6"/><polyline points="1391.7,400 1391.7,1070" stroke="#e0e0e0" stroke-width="1" opacity="0.6"/><polyline points="1416,400 1416,1060" stroke="#e0e0e0" stroke-width="1" opacity="0.6"/><polyline points="1404,400 1404,1070" stroke="#d8d8d8" stroke-width="1" opacity="0.4"/><polyline points="1385,410 1385,628" stroke="#fff" stroke-width="1" opacity="0.6"/><polyline points="1421,548 1421,640" stroke="#fff" stroke-width="1" opacity="0.6"/><polyline points="1447,966 1447,1042" stroke="#fff" stroke-width="1" opacity="0.8"/><polyline points="1455,655 1455,745" stroke="#fff" stroke-width="1" opacity="0.8"/><polyline points="1374.5,654 1374.5,795" stroke="#fff" stroke-width="1" opacity="0.8"/><polyline points="1240.3,655 1240.3,794" stroke="#0f1417" stroke-width="1.6" opacity="0.75"/><polyline points="1266,655 1266,794" stroke="#0f1417" stroke-width="2" opacity="0.75"/><polyline points="1240.3,420 1240.3,640" stroke="#0f1417" stroke-width="1.2" opacity="0.5"/><polyline points="1266,420 1266,640" stroke="#0f1417" stroke-width="1.6" opacity="0.6"/><polyline points="1390.5,410 1390.5,628" stroke="#0f1417" stroke-width="1.4" opacity="0.6"/><polyline points="1417.5,410 1417.5,640" stroke="#0f1417" stroke-width="1.6" opacity="0.6"/><polyline points="1266,592 1486,592" stroke="#9a8a8a" stroke-width="1" opacity="0.25"/><polyline points="1266,597 1486,597" stroke="#9a8a8a" stroke-width="1" opacity="0.35"/><polyline points="1266,601 1486,601" stroke="#9a8a8a" stroke-width="1" opacity="0.3"/><polyline points="1266,606 1486,606" stroke="#9a8a8a" stroke-width="1" opacity="0.35"/><polyline points="1266,610 1486,610" stroke="#9a8a8a" stroke-width="1" opacity="0.25"/><polyline points="1141,579 1152,582" stroke="#fff" stroke-width="1" opacity="1"/><polyline points="1148,628.5 1233,628.5" stroke="#fff" stroke-width="1" opacity="0.6"/><rect x="1058" y="643" width="68" height="9" fill="#d6d6d6" opacity=".8"/><rect x="1057" y="793" width="70" height="12" fill="#d0d0d0" opacity=".75"/><rect x="1058" y="862" width="68" height="10" fill="#d6d6d6" opacity=".8"/><rect x="1058" y="528" width="64" height="6" fill="#cfcfcf" opacity=".6"/><rect x="970" y="806" width="9" height="56" fill="#d0d0d0" opacity=".7"/><rect x="886" y="851" width="172" height="11" fill="#7c7c7c" opacity=".55"/><polyline points="886,851.5 1004,851.5" stroke="#f0f0f0" stroke-width="1" opacity="0.7"/><polyline points="1004,862 1004,871 1058,871" stroke="#f0f0f0" stroke-width="1" opacity="0.7"/><circle cx="1183" cy="834" r="17" fill="#8e8e8e" stroke="#e6e6e6" stroke-width="1"/><polyline points="1183,817 1183,851" stroke="#e6e6e6" stroke-width="2" opacity="1"/><polyline points="1140,812 1236,811" stroke="#fff" stroke-width="1" opacity="1"/><polyline points="1140,862 1236,863" stroke="#fff" stroke-width="1" opacity="1"/><polyline points="1126,800 1140,812 1140,856 1126,870" stroke="#fff" stroke-width="1" opacity="0.8"/><polyline points="1058,800 1046,812" stroke="#fff" stroke-width="1" opacity="0.7"/><polyline points="790.5,618 816,676 828,708 836,751 837,801 837,930" stroke="#fff" stroke-width="1" opacity="0.85"/><polyline points="831,930 831,1094" stroke="#fff" stroke-width="1" opacity="0.85"/><polyline points="838,611 828,621 851,676 860,673 855,688" stroke="#fff" stroke-width="1" opacity="0.85"/><polyline points="830.5,1213 841,1208 830,1150" stroke="#fff" stroke-width="1" opacity="0.85"/><polyline points="869,1131 887,1203 892,1217 879,1220 876,1210 887,1203" stroke="#fff" stroke-width="1" opacity="0.85"/><polyline points="820,758 837,758" stroke="#fff" stroke-width="1" opacity="0.8"/><polyline points="822,763 837,763" stroke="#d0d0d0" stroke-width="1" opacity="0.5"/><polyline points="820,795 837,795" stroke="#fff" stroke-width="1" opacity="0.8"/><polyline points="822,800 837,800" stroke="#d0d0d0" stroke-width="1" opacity="0.5"/><polyline points="820,852 837,852" stroke="#fff" stroke-width="1" opacity="0.8"/><polyline points="822,857 837,857" stroke="#d0d0d0" stroke-width="1" opacity="0.5"/><polyline points="820,895 837,895" stroke="#fff" stroke-width="1" opacity="0.8"/><polyline points="822,900 837,900" stroke="#d0d0d0" stroke-width="1" opacity="0.5"/><polyline points="820,938 837,938" stroke="#fff" stroke-width="1" opacity="0.8"/><polyline points="822,943 837,943" stroke="#d0d0d0" stroke-width="1" opacity="0.5"/><polyline points="820,968 837,968" stroke="#fff" stroke-width="1" opacity="0.8"/><polyline points="822,973 837,973" stroke="#d0d0d0" stroke-width="1" opacity="0.5"/><polyline points="742,1168.99 748,1190.99" stroke="#fff" stroke-width="1.2" opacity="0.85"/><polyline points="756,1162.97 762,1184.97" stroke="#fff" stroke-width="1.2" opacity="0.85"/><polyline points="770,1156.95 776,1178.95" stroke="#fff" stroke-width="1.2" opacity="0.85"/><polyline points="784,1150.93 790,1172.93" stroke="#fff" stroke-width="1.2" opacity="0.85"/><polyline points="800,1144.05 806,1166.05" stroke="#fff" stroke-width="1.2" opacity="0.85"/><polyline points="812,1138.89 818,1160.89" stroke="#fff" stroke-width="1.2" opacity="0.85"/><polyline points="735,1154.5 780.5,1131 780.5,1112 795.5,1112 795.5,1126 820,1117" stroke="#fff" stroke-width="1" opacity="0.85"/><polyline points="735,1172.5 815,1138" stroke="#fff" stroke-width="1" opacity="0.85"/><polyline points="1057,1037 1126,1037" stroke="#fff" stroke-width="1" opacity="0.8"/><polyline points="1035,1075 1250,1075 1250,1084 1326,1084 1326,1074 1375,1074" stroke="#fff" stroke-width="1" opacity="0.7"/><polyline points="1100,1076 1106,1088" stroke="#fff" stroke-width="1" opacity="0.7"/><polyline points="1110,1076 1116,1088" stroke="#fff" stroke-width="1" opacity="0.7"/><polyline points="1146,1076 1152,1088" stroke="#fff" stroke-width="1" opacity="0.7"/><polyline points="1152,1076 1158,1088" stroke="#fff" stroke-width="1" opacity="0.7"/><polyline points="1190,1076 1196,1088" stroke="#fff" stroke-width="1" opacity="0.7"/><polyline points="1200,1076 1206,1088" stroke="#fff" stroke-width="1" opacity="0.7"/><polyline points="1290,1076 1296,1088" stroke="#fff" stroke-width="1" opacity="0.7"/><polyline points="1300,1076 1306,1088" stroke="#fff" stroke-width="1" opacity="0.7"/><polyline points="1350,1076 1356,1088" stroke="#fff" stroke-width="1" opacity="0.7"/><polyline points="1076,1076 1076,1110" stroke="#c8c8c8" stroke-width="1" opacity="0.4"/><polyline points="1082,1076 1082,1110" stroke="#c8c8c8" stroke-width="1" opacity="0.5"/><polyline points="1088,1076 1088,1110" stroke="#c8c8c8" stroke-width="1" opacity="0.3"/><polyline points="1093,1076 1093,1110" stroke="#c8c8c8" stroke-width="1" opacity="0.6"/><polyline points="1098,1076 1098,1110" stroke="#c8c8c8" stroke-width="1" opacity="0.4"/><polyline points="1104,1076 1104,1110" stroke="#c8c8c8" stroke-width="1" opacity="0.5"/><polyline points="1110,1076 1110,1110" stroke="#c8c8c8" stroke-width="1" opacity="0.3"/><polyline points="937,1086 937,1170 948,1170 948,1163 968,1163 968,1170 988,1170" stroke="#fff" stroke-width="1" opacity="0.9"/><polyline points="1403,1101 1401,1114 1380,1137" stroke="#fff" stroke-width="1" opacity="0.8"/><polyline points="1392,1150 1460,1128" stroke="#dcdcdc" stroke-width="1.5" opacity="0.5"/><polyline points="1440,1118 1470,1110" stroke="#dcdcdc" stroke-width="1.5" opacity="0.5"/><polyline points="1439,1091 1452,1099 1478,1101" stroke="#fff" stroke-width="1" opacity="0.8"/></g><g fill="none" stroke="#60686c" stroke-width="1" opacity=".6"><path d="M1290 420q20 30 5 60"/><path d="M1320 480q30 20 50 60"/><path d="M1300 520q-20 40 10 80"/><path d="M1330 690q20 -30 40 -20"/><path d="M1150 660q10 40 -10 80"/><path d="M1180 700q20 20 10 60"/><path d="M1300 880q30 10 40 60"/><path d="M1330 940q-10 30 20 50"/><path d="M1150 900q20 40 0 90"/><path d="M940 650l20 -12"/><path d="M900 920q30 -20 60 -30"/><path d="M1000 700q10 30 -5 60"/><path d="M1460 500q10 30 -8 50"/><path d="M1180 960q20 20 40 10"/><path d="M1210 480l12 -10"/></g><path d="M842 580L1036 588" stroke="#70787c" stroke-width="1" stroke-dasharray="6 26" opacity=".5" fill="none"/><defs><linearGradient id="fd1" gradientUnits="userSpaceOnUse" x1="758" y1="478" x2="776" y2="526"><stop offset="0" stop-color="#0f1417" stop-opacity="0.75"/><stop offset="1" stop-color="#0f1417" stop-opacity="0"/></linearGradient><linearGradient id="fd2" gradientUnits="userSpaceOnUse" x1="738" y1="520" x2="756" y2="513"><stop offset="0" stop-color="#0f1417" stop-opacity="0.55"/><stop offset="1" stop-color="#0f1417" stop-opacity="0"/></linearGradient><linearGradient id="fd3" gradientUnits="userSpaceOnUse" x1="832" y1="1225" x2="850" y2="1218"><stop offset="0" stop-color="#0f1417" stop-opacity="0.7"/><stop offset="1" stop-color="#0f1417" stop-opacity="0"/></linearGradient><linearGradient id="fd4" gradientUnits="userSpaceOnUse" x1="912" y1="1265" x2="898" y2="1270"><stop offset="0" stop-color="#0f1417" stop-opacity="0.55"/><stop offset="1" stop-color="#0f1417" stop-opacity="0"/></linearGradient><linearGradient id="fd5" gradientUnits="userSpaceOnUse" x1="907" y1="368" x2="940" y2="368"><stop offset="0" stop-color="#0f1417" stop-opacity="0.7"/><stop offset="1" stop-color="#0f1417" stop-opacity="0"/></linearGradient><linearGradient id="fd6" gradientUnits="userSpaceOnUse" x1="1000" y1="1125" x2="972" y2="1125"><stop offset="0" stop-color="#0f1417" stop-opacity="0.75"/><stop offset="1" stop-color="#0f1417" stop-opacity="0"/></linearGradient><linearGradient id="fd7" gradientUnits="userSpaceOnUse" x1="1036" y1="610" x2="1054" y2="610"><stop offset="0" stop-color="#0f1417" stop-opacity="0.6"/><stop offset="1" stop-color="#0f1417" stop-opacity="0"/></linearGradient><linearGradient id="fd8" gradientUnits="userSpaceOnUse" x1="1382" y1="1160" x2="1402" y2="1150"><stop offset="0" stop-color="#0f1417" stop-opacity="0.6"/><stop offset="1" stop-color="#0f1417" stop-opacity="0"/></linearGradient><linearGradient id="fd9" gradientUnits="userSpaceOnUse" x1="1440" y1="1190" x2="1434" y2="1172"><stop offset="0" stop-color="#0f1417" stop-opacity="0.55"/><stop offset="1" stop-color="#0f1417" stop-opacity="0"/></linearGradient><linearGradient id="fd10" gradientUnits="userSpaceOnUse" x1="1048" y1="240" x2="1066" y2="240"><stop offset="0" stop-color="#0f1417" stop-opacity="0.6"/><stop offset="1" stop-color="#0f1417" stop-opacity="0"/></linearGradient></defs><polygon points="725,470 810,470 830,540 740,560" fill="url(#fd1)"/><polygon points="730,500 760,490 800,610 770,625" fill="url(#fd2)"/><polygon points="825,1210 850,1205 880,1300 860,1305" fill="url(#fd3)"/><polygon points="915,1275 895,1215 885,1220 903,1285" fill="url(#fd4)"/><polygon points="905,330 945,330 945,402 905,402" fill="url(#fd5)"/><polygon points="1002,1080 970,1080 970,1172 1002,1172" fill="url(#fd6)"/><polygon points="1034,584 1056,584 1056,636 1034,636" fill="url(#fd7)"/><polygon points="1376,1130 1400,1120 1425,1190 1395,1192" fill="url(#fd8)"/><polygon points="1400,1192 1490,1160 1485,1140 1395,1170" fill="url(#fd9)"/><polygon points="1046,205 1068,205 1068,272 1046,272" fill="url(#fd10)"/>
</g>
<rect x="1015.5" y="768.5" width="167" height="141" fill="none" stroke="#e60000" stroke-width="3"/>
<path d="M1083.3 864L1091.6 888L1085 886.8L1085 902L1081.6 902L1081.6 886.8L1075.6 888Z" fill="#f00000"/>
</svg>
<!-- ===== HUD overlay ===== -->
<div id="hud">
<div class="a" style="left:836px;top:62px;width:642px;height:100px;border-radius:50px;background:rgba(23,28,32,.9)"></div>
<div class="a" style="left:889px;top:92px;width:39px;height:39px;border-radius:10px;background:#b0b0b0;color:#14191c;font-family:'Liberation Sans',sans-serif;font-size:17px;line-height:40px;text-align:center;-webkit-text-stroke:.4px #14191c">P</div>
<svg class="a" style="left:970px;top:84px" width="56" height="56" viewBox="-28 -28 56 56">
 <circle r="23.7" fill="none" stroke="#c6c6c6" stroke-width="5.4"/>
 <circle r="16.4" fill="#c6c6c6"/>
 <rect x="-22" y="-3.4" width="44" height="6.8" fill="#c6c6c6"/>
 <rect x="-3" y="10" width="6" height="12" fill="#c6c6c6"/>
 <text x="0" y="3.9" text-anchor="middle" font-family="Liberation Sans, sans-serif" font-weight="bold" font-size="10.5" fill="#101417">N/A</text>
</svg>
<svg class="a" style="left:1048px;top:88px" width="30" height="40" viewBox="0 0 30 40"><path d="M23.5 6L7 19.5L23.5 33" fill="none" stroke="#5a5a5a" stroke-width="4.2"/></svg>
<svg class="a" style="left:1151px;top:88px" width="30" height="40" viewBox="0 0 30 40"><path d="M6.5 6L23 19.5L6.5 33" fill="none" stroke="#5a5a5a" stroke-width="4.2"/></svg>
<div class="a" style="left:1084px;top:72.7px;width:60px;height:70px;line-height:70px;text-align:center;font-family:'DejaVu Sans Light','DejaVu Sans',sans-serif;font-weight:200;font-size:55.5px;color:#bdbdbd;-webkit-text-stroke:1.1px #bdbdbd;transform:scaleX(1.15)">0</div>
<div class="a b" style="left:1081px;top:129px;width:60px;text-align:center;font-family:'Liberation Sans',sans-serif;font-size:15.6px;color:#b4b4b4;transform:scaleX(.9)">km/h</div>
<!-- traffic light -->
<svg class="a" style="left:1210px;top:86px" width="52" height="52" viewBox="-26 -26 52 52">
 <circle r="25" fill="#4f4f4f"/>
 <g fill="#2e2e2e"><rect x="-5.6" y="-9.6" width="11.2" height="19.4" rx="2"/><path d="M-9.8 -6.8h4v4.4c-2.4-.4-3.8-2-4-4.4zM-9.8 -1h4v4.4c-2.4-.4-3.8-2-4-4.4zM-9.8 4.8h4v4.4c-2.4-.4-3.8-2-4-4.4zM9.8 -6.8h-4v4.4c2.4-.4 3.8-2 4-4.4zM9.8 -1h-4v4.4c2.4-.4 3.8-2 4-4.4zM9.8 4.8h-4v4.4c2.4-.4 3.8-2 4-4.4z"/></g>
 <g fill="#4f4f4f"><circle cy="-5.6" r="1.7"/><circle cy="0" r="1.7"/><circle cy="5.6" r="1.7"/></g>
</svg>
<!-- speed limit -->
<svg class="a" style="left:1293px;top:86px" width="52" height="52" viewBox="-26 -26 52 52">
 <circle r="21.4" fill="#181d20" stroke="#3a2d2f" stroke-width="4"/>
 <path d="M-6.3 -20.5A21.4 21.4 0 0 0 -6.3 20.5" fill="none" stroke="#f28d96" stroke-width="4"/>
 <text x="0" y="7.6" text-anchor="middle" font-family="Liberation Sans, sans-serif" font-size="22" fill="#2f3437">72</text>
</svg>
<!-- route icon -->
<svg class="a" style="left:1333px;top:82px" width="30" height="26" viewBox="0 0 30 26">
 <path d="M9.6 7H17a3.6 3.6 0 0 1 0 7.2H13a3.6 3.6 0 0 0 0 7.2h5" fill="none" stroke="#e6e6e6" stroke-width="2.6" transform="translate(0,-2.4)"/>
 <circle cx="6.2" cy="4.6" r="2.9" fill="#171c20" stroke="#e6e6e6" stroke-width="2.4"/>
 <circle cx="21.7" cy="19" r="4" fill="#e6e6e6"/>
</svg>
<svg class="a" style="left:1334px;top:117px" width="26" height="26" viewBox="-13 -13 26 26">
 <path d="M-4.4 -8.6A9.6 9.6 0 1 0 0 -9.6V-4" fill="none" stroke="#e6e6e6" stroke-width="2.6"/>
 <path d="M0 .4L-6.4 -6.6" stroke="#e6e6e6" stroke-width="2.4"/>
 <circle cx="-4.6" cy="1" r="1.3" fill="#e6e6e6"/><circle cx="0" cy="5.2" r="1.3" fill="#e6e6e6"/><circle cx="4.8" cy="1" r="1.3" fill="#e6e6e6"/>
</svg>
<div class="a" style="left:1340px;top:83.5px;width:101.5px;height:28px;line-height:28px;text-align:right;font-size:20.4px;color:#c8c8c8">0.0 m</div>
<div class="a" style="left:1355px;top:117.5px;width:101px;height:28px;line-height:28px;text-align:right;font-size:20.6px;color:#c8c8c8">0 sec</div>
</div>
<!-- ===== right dock ===== -->
<div id="right">
<div class="strip" style="left:694px;top:42px;width:15px;height:1300px;background:#161b1e"></div>
<div class="strip" style="left:711px;top:44px;width:12px;height:1296px;background:#161b1e"></div>
<div class="strip" style="left:1499px;top:44px;width:12px;height:1296px;background:#161b1e"></div>
<div class="strip" style="left:1513px;top:42px;width:15px;height:1300px;background:#161b1e"></div>
<div class="hb" style="left:700px;top:678px;width:3px;height:27px"></div>
<div class="hb" style="left:1519px;top:678px;width:3px;height:27px"></div>
<div class="a" style="left:714px;top:687px;width:0;height:0;border-right:5px solid #6aa6c8;border-top:4px solid transparent;border-bottom:4px solid transparent"></div>
<div class="a" style="left:1503px;top:687px;width:0;height:0;border-left:5px solid #6aa6c8;border-top:4px solid transparent;border-bottom:4px solid transparent"></div>
<svg class="a" style="left:1533px;top:50px" width="15" height="16" viewBox="0 0 15 16"><rect x="0" y="0.5" width="15" height="11.5" fill="#e8e8e8"/><rect x="1" y="1.5" width="4.4" height="9.5" fill="#c87880"/><rect x="5.4" y="1.5" width="4.3" height="9.5" fill="#7cc97c"/><rect x="9.7" y="1.5" width="4.3" height="9.5" fill="#9a98e8"/><rect x="3" y="13.2" width="9" height="1.6" fill="#e0e0e0"/><rect x="2.5" y="14.6" width="10" height="1.2" fill="#000"/></svg>
<div class="t" style="left:1554px;top:47px">Displays</div>
<svg class="x" style="left:1976px;top:52px" viewBox="0 0 10 10"><path d="M1.500 1.500L8.500 8.500M8.500 1.500L1.500 8.500" stroke="#8bd0f0" stroke-width="1.500" fill="none"/></svg>
<div class="a" style="left:1800px;top:73px;width:1px;height:615px;background:#2a3034"></div>
<div class="a" style="left:1528px;top:70px;width:458px;height:618px;overflow:hidden">
<div class="ar" style="left:49px;top:9px"></div>
<svg class="a" style="left:71px;top:6px" width="16" height="16" viewBox="0 0 16 16"><circle cx="8" cy="8" r="7.4" fill="#e01818"/><circle cx="8" cy="8" r="7.4" fill="none" stroke="#b00000" stroke-width="1"/><rect x="3.6" y="6.4" width="8.8" height="3.2" rx=".6" fill="#fff"/></svg>
<div class="t" style="left:93px;top:4px">Status: Error</div>
<div class="ar" style="left:49px;top:32px"></div>
<div class="t" style="left:71px;top:27px">Topic</div>
<div class="t" style="left:276px;top:27px">/map/vector_map_marker</div>
<div class="ad" style="left:47px;top:57px"></div>
<div class="t" style="left:71px;top:50px">Namespaces</div>
<div class="t" style="left:93px;top:73px">stop_lines</div>
<div class="cb" style="left:278px;top:75px"><svg width="15" height="15" viewBox="0 0 15 15"><path d="M3.6 7.6L6.3 10.2L11.3 4.8" stroke="#0f1417" stroke-width="1.9" fill="none"/></svg></div>
<div class="t" style="left:93px;top:96px">road_borders</div>
<div class="cb" style="left:278px;top:98px"><svg width="15" height="15" viewBox="0 0 15 15"><path d="M3.6 7.6L6.3 10.2L11.3 4.8" stroke="#0f1417" stroke-width="1.9" fill="none"/></svg></div>
<div class="t" style="left:93px;top:119px">lanelet direction</div>
<div class="cb" style="left:278px;top:121px"><svg width="15" height="15" viewBox="0 0 15 15"><path d="M3.6 7.6L6.3 10.2L11.3 4.8" stroke="#0f1417" stroke-width="1.9" fill="none"/></svg></div>
<div class="t" style="left:93px;top:142px">crosswalk_lanelets</div>
<div class="cb" style="left:278px;top:144px"><svg width="15" height="15" viewBox="0 0 15 15"><path d="M3.6 7.6L6.3 10.2L11.3 4.8" stroke="#0f1417" stroke-width="1.9" fill="none"/></svg></div>
<div class="t" style="left:93px;top:165px">pedestrian_polygon_ma...</div>
<div class="cb" style="left:278px;top:167px"><svg width="15" height="15" viewBox="0 0 15 15"><path d="M3.6 7.6L6.3 10.2L11.3 4.8" stroke="#0f1417" stroke-width="1.9" fill="none"/></svg></div>
<div class="t" style="left:93px;top:188px">walkway_lanelets</div>
<div class="cb" style="left:278px;top:190px"><svg width="15" height="15" viewBox="0 0 15 15"><path d="M3.6 7.6L6.3 10.2L11.3 4.8" stroke="#0f1417" stroke-width="1.9" fill="none"/></svg></div>
<div class="t" style="left:93px;top:211px">detection_area</div>
<div class="cb" style="left:278px;top:213px"><svg width="15" height="15" viewBox="0 0 15 15"><path d="M3.6 7.6L6.3 10.2L11.3 4.8" stroke="#0f1417" stroke-width="1.9" fill="none"/></svg></div>
<div class="t" style="left:93px;top:234px">detection_area_stopline</div>
<div class="cb" style="left:278px;top:236px"><svg width="15" height="15" viewBox="0 0 15 15"><path d="M3.6 7.6L6.3 10.2L11.3 4.8" stroke="#0f1417" stroke-width="1.9" fill="none"/></svg></div>
<div class="t" style="left:93px;top:257px">shoulder_left_lane_bound</div>
<div class="cb" style="left:278px;top:259px"><svg width="15" height="15" viewBox="0 0 15 15"><path d="M3.6 7.6L6.3 10.2L11.3 4.8" stroke="#0f1417" stroke-width="1.9" fill="none"/></svg></div>
<div class="t" style="left:93px;top:280px">shoulder_right_lane_bou...</div>
<div class="cb" style="left:278px;top:282px"><svg width="15" height="15" viewBox="0 0 15 15"><path d="M3.6 7.6L6.3 10.2L11.3 4.8" stroke="#0f1417" stroke-width="1.9" fill="none"/></svg></div>
<div class="t" style="left:93px;top:303px">shoulder_center_lane_line</div>
<div class="cb off" style="left:278px;top:305px"></div>
<div class="t" style="left:93px;top:326px">shoulder_lane_start_bou...</div>
<div class="cb" style="left:278px;top:328px"><svg width="15" height="15" viewBox="0 0 15 15"><path d="M3.6 7.6L6.3 10.2L11.3 4.8" stroke="#0f1417" stroke-width="1.9" fill="none"/></svg></div>
<div class="t" style="left:93px;top:349px">shoulder_center_line_arr...</div>
<div class="cb" style="left:278px;top:351px"><svg width="15" height="15" viewBox="0 0 15 15"><path d="M3.6 7.6L6.3 10.2L11.3 4.8" stroke="#0f1417" stroke-width="1.9" fill="none"/></svg></div>
<div class="t" style="left:93px;top:372px">left_lane_bound</div>
<div class="cb" style="left:278px;top:374px"><svg width="15" height="15" viewBox="0 0 15 15"><path d="M3.6 7.6L6.3 10.2L11.3 4.8" stroke="#0f1417" stroke-width="1.9" fill="none"/></svg></div>
<div class="t" style="left:93px;top:395px">right_lane_bound</div>
<div class="cb" style="left:278px;top:397px"><svg width="15" height="15" viewBox="0 0 15 15"><path d="M3.6 7.6L6.3 10.2L11.3 4.8" stroke="#0f1417" stroke-width="1.9" fill="none"/></svg></div>
<div class="t" style="left:93px;top:418px">center_lane_line</div>
<div class="cb off" style="left:278px;top:420px"></div>
<div class="t" style="left:93px;top:441px">lane_start_bound</div>
<div class="cb off" style="left:278px;top:443px"></div>
<div class="t" style="left:93px;top:464px">center_line_arrows</div>
<div class="cb off" style="left:278px;top:466px"></div>
<div class="t" style="left:93px;top:487px">traffic_light_triangle</div>
<div class="cb" style="left:278px;top:489px"><svg width="15" height="15" viewBox="0 0 15 15"><path d="M3.6 7.6L6.3 10.2L11.3 4.8" stroke="#0f1417" stroke-width="1.9" fill="none"/></svg></div>
<div class="t" style="left:93px;top:510px">traffic_light</div>
<div class="cb" style="left:278px;top:512px"><svg width="15" height="15" viewBox="0 0 15 15"><path d="M3.6 7.6L6.3 10.2L11.3 4.8" stroke="#0f1417" stroke-width="1.9" fill="none"/></svg></div>
<div class="t" style="left:93px;top:533px">traffic_light_reg_elem_id</div>
<div class="cb off" style="left:278px;top:535px"></div>
<div class="a" style="left:0;top:555px;width:458px;height:23px;background:#2d3336"></div>
<div class="a" style="left:272px;top:555px;width:1px;height:23px;background:#3a4044"></div>
<div class="t" style="left:93px;top:556px">traffic_light_id</div>
<div class="cb" style="left:278px;top:558px"><svg width="15" height="15" viewBox="0 0 15 15"><path d="M3.6 7.6L6.3 10.2L11.3 4.8" stroke="#0f1417" stroke-width="1.9" fill="none"/></svg></div>
<div class="t" style="left:93px;top:579px">lanelet_id</div>
<div class="cb off" style="left:278px;top:581px"></div>
<div class="t" style="left:93px;top:602px">crosswalk_lanelet_id</div>
<div class="cb" style="left:278px;top:604px"><svg width="15" height="15" viewBox="0 0 15 15"><path d="M3.6 7.6L6.3 10.2L11.3 4.8" stroke="#0f1417" stroke-width="1.9" fill="none"/></svg></div>
</div>
<div class="strip" style="left:1528px;top:688px;width:458px;height:15px"></div>
<div class="hb" style="left:1750px;top:694px;width:27px;height:3px"></div>
<div class="bbtn" style="left:1531px;top:710px;width:110px">Add</div>
<div class="gbtn" style="left:1649px;top:710px;width:110px">Duplicate</div>
<div class="gbtn" style="left:1767px;top:710px;width:110px">Remove</div>
<div class="gbtn" style="left:1885px;top:710px;width:110px">Rename</div>
<div class="strip" style="left:1528px;top:741px;width:458px;height:15px"></div>
<div class="hb" style="left:1750px;top:747px;width:27px;height:3px"></div>
<svg class="a" style="left:1532px;top:765px" width="15" height="15" viewBox="0 0 15 15"><path d="M14.300 .8L9.200 6" stroke="#e4e4e4" stroke-width="1.300" fill="none"/><path d="M6.200 8.800L2.600 12.600" stroke="#2a5cb4" stroke-width="3.600" stroke-linecap="round" fill="none"/><path d="M5.800 9.400L3 12.200" stroke="#a8c0ea" stroke-width="1.300" stroke-linecap="round" fill="none"/><path d="M4.600 4.600L12.800 12.800" stroke="#d2d2d2" stroke-width="2.500" stroke-linecap="round" fill="none"/><path d="M4.400 .9L5 3L3 5L.9 4.400" stroke="#dcdcdc" stroke-width="1.700" fill="none" stroke-linejoin="round"/></svg>
<div class="t" style="left:1554px;top:761px">Tool Properties</div>
<svg class="x" style="left:1976px;top:766px" viewBox="0 0 10 10"><path d="M1.500 1.500L8.500 8.500M8.500 1.500L1.500 8.500" stroke="#8bd0f0" stroke-width="1.500" fill="none"/></svg>
<div class="a" style="left:1805px;top:787px;width:1px;height:525px;background:#2a3034"></div>
<div class="ar" style="left:1533px;top:792px"></div>
<div class="t" style="left:1555px;top:787px">Interact</div>
<div class="ar" style="left:1533px;top:813px"></div>
<div class="t" style="left:1555px;top:808px">Measure</div>
<div class="ar" style="left:1533px;top:834px"></div>
<div class="t" style="left:1555px;top:829px">2D Pose Estimate</div>
<div class="ar" style="left:1533px;top:855px"></div>
<div class="t" style="left:1555px;top:850px">2D Goal Pose</div>
<div class="ar" style="left:1533px;top:876px"></div>
<div class="t" style="left:1555px;top:871px">2D Rough Goal Pose</div>
<div class="ad" style="left:1531px;top:899px"></div>
<div class="t" style="left:1555px;top:892px">2D Dummy Pedestrian</div>
<div class="t" style="left:1577px;top:913px">Interactive</div>
<div class="cb" style="left:1811px;top:915px"><svg width="15" height="15" viewBox="0 0 15 15"><path d="M3.6 7.6L6.3 10.2L11.3 4.8" stroke="#0f1417" stroke-width="1.9" fill="none"/></svg></div>
<div class="t" style="left:1577px;top:934px">Predicted</div>
<div class="cb off" style="left:1811px;top:936px"></div>
<div class="t" style="left:1577px;top:955px">Target Frame</div>
<div class="t" style="left:1809px;top:955px">&lt;Fixed Frame&gt;</div>
<div class="t" style="left:1577px;top:976px">Pose Topic</div>
<div class="t" style="left:1809px;top:976px">/simulation/dummy_perce...</div>
<div class="t" style="left:1577px;top:997px">X std deviation</div>
<div class="t" style="left:1809px;top:997px">0.03</div>
<div class="t" style="left:1577px;top:1018px">Y std deviation</div>
<div class="t" style="left:1809px;top:1018px">0.03</div>
<div class="t" style="left:1577px;top:1039px">Z std deviation</div>
<div class="t" style="left:1809px;top:1039px">0.03</div>
<div class="t" style="left:1577px;top:1060px">Theta std deviation</div>
<div class="t" style="left:1809px;top:1060px">0.0872665</div>
<div class="t" style="left:1577px;top:1081px">Z position</div>
<div class="t" style="left:1809px;top:1081px">1</div>
<div class="t" style="left:1577px;top:1102px">Velocity</div>
<div class="t" style="left:1809px;top:1102px">0</div>
<div class="t" style="left:1577px;top:1123px">Acceleration</div>
<div class="t" style="left:1809px;top:1123px">0</div>
<div class="t" style="left:1577px;top:1144px">Max velocity</div>
<div class="t" style="left:1809px;top:1144px">33.3</div>
<div class="t" style="left:1577px;top:1165px">Min velocity</div>
<div class="t" style="left:1809px;top:1165px">-33.3</div>
<div class="ar" style="left:1533px;top:1191px"></div>
<div class="t" style="left:1555px;top:1186px">2D Dummy Car</div>
<div class="ar" style="left:1533px;top:1212px"></div>
<div class="t" style="left:1555px;top:1207px">2D Dummy Bus</div>
<div class="ar" style="left:1533px;top:1233px"></div>
<div class="t" style="left:1555px;top:1228px">2D Checkpoint Pose</div>
<div class="ar" style="left:1533px;top:1254px"></div>
<div class="t" style="left:1555px;top:1249px">Delete All Objects</div>
<div class="strip" style="left:1528px;top:1312px;width:458px;height:30px;background:#12171a"></div>
<div class="a" style="left:1603px;top:1312px;width:143px;height:30px;background:#2a2f32;border-top:2px solid #8bd0f0"></div>
<div class="t b" style="left:1544px;top:1318px">Views</div>
<div class="t b" style="left:1619px;top:1318px">Tool Properties</div>
<div class="t b" style="left:1930px;top:1343px;font-size:12px">31 fps</div>
</div>
</body>
</html>
